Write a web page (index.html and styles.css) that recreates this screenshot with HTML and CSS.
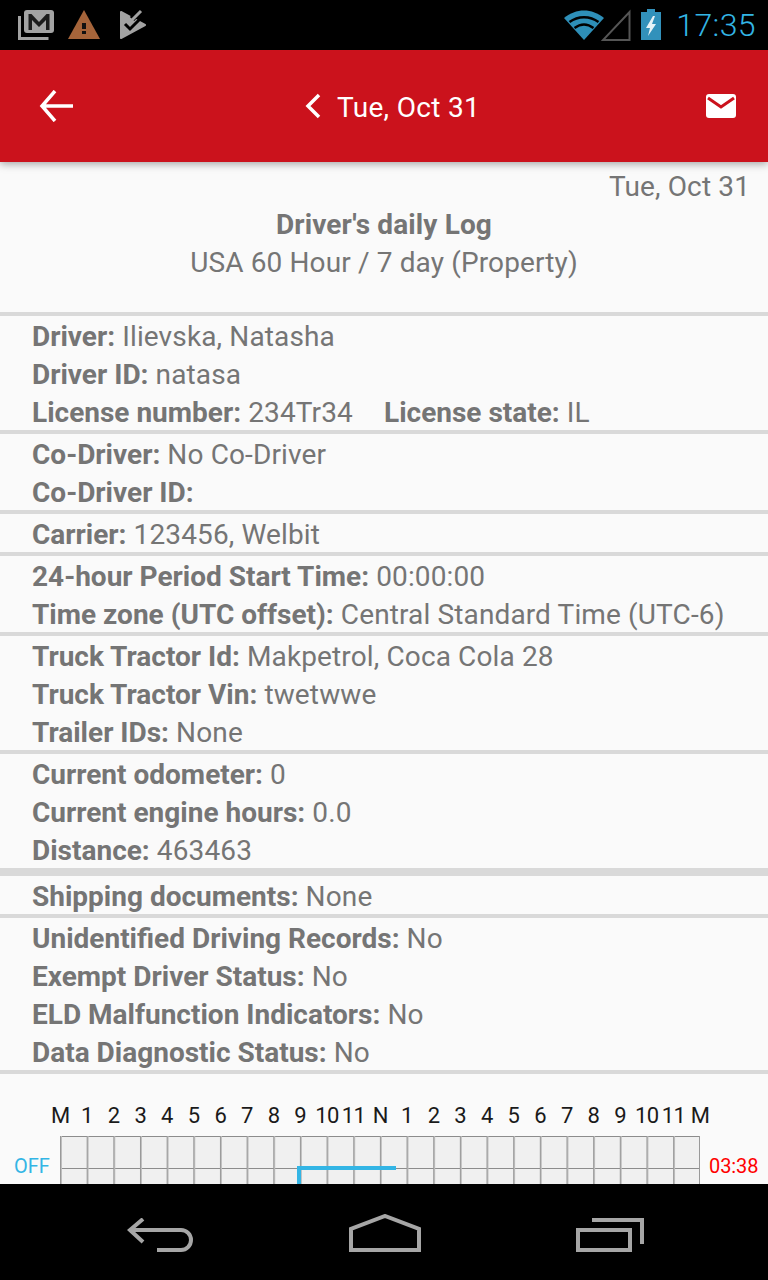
FILE: index.html
```html
<!DOCTYPE html>
<html>
<head>
    <title>Driver's daily Log</title>
    <link rel="stylesheet" href="styles.css">
</head>
<body>
    <div class="screen">
        <div class="status-bar">
            <div class="status-left">
                <svg width="38" height="32" viewBox="0 0 38 32">
                    <path d="M1.500 7v22.500h29" fill="none" stroke="#a3a3a3" stroke-width="3"/>
                    <rect x="6" y="1" width="30" height="23" rx="3" fill="#a3a3a3"/>
                    <path d="M10.500 21V5h3l7.500 8 7.500-8h3v16h-3.500V11l-7 7-7-7v10z" fill="#1c1c1c"/>
                </svg>
                <svg width="32" height="32" viewBox="0 0 32 32">
                    <path d="M16 1 32 30H0z" fill="#a5643a"/>
                    <rect x="14" y="14" width="4" height="6" fill="#111"/>
                    <rect x="14" y="22" width="4" height="3" fill="#111"/>
                </svg>
                <svg class="task-icon" width="26" height="32" viewBox="0 0 26 32">
                    <path d="M1 3 25 16 1 29z" fill="#a3a3a3" stroke="#a3a3a3" stroke-linejoin="round" stroke-width="2"/>
                    <path d="M12 10 21 1" fill="none" stroke="#000" stroke-width="6"/>
                    <path d="M11 12 21 2" fill="none" stroke="#a3a3a3" stroke-width="3"/>
                    <path d="M5 15l5 5 11-11" fill="none" stroke="#000" stroke-width="3"/>
                </svg>
            </div>
            <div class="status-right">
                <svg width="40" height="32" viewBox="0 0 40 32">
                    <path d="M20 31 0 9C12-1 28-1 40 9z" fill="#2e8fb8"/>
                    <path d="M5.500 13C14 6.500 26 6.500 34.500 13M10.500 19c6-4.500 13-4.500 19 0" fill="none" stroke="#000" stroke-width="2.500"/>
                </svg>
                <svg class="signal" width="30" height="32" viewBox="0 0 30 32">
                    <path d="M28.500 3v28H2z" fill="none" stroke="#555" stroke-width="2"/>
                </svg>
                <svg class="battery" width="20" height="32" viewBox="0 0 20 32">
                    <path d="M6 0h8v3h6v28H0V3h6z" fill="#3291bb"/>
                    <path d="M12 7 5 19h4l-2 8 8-12h-4l3-8z" fill="#e6f2f7"/>
                </svg>
                <span class="clock">17:35</span>
            </div>
        </div>

        <div class="toolbar">
            <svg class="back-arrow" width="36" height="32" viewBox="0 0 36 32">
                <path d="M35 16H5M17 1 4 16l13 15" fill="none" stroke="#fff" stroke-width="3.500"/>
            </svg>
            <div class="toolbar-title">
                <svg width="18" height="26" viewBox="0 0 18 26">
                    <path d="M15 2 4 13l11 11" fill="none" stroke="#fff" stroke-width="3.500"/>
                </svg>
                <span>Tue, Oct 31</span>
            </div>
            <svg class="mail" width="30" height="24" viewBox="0 0 30 24">
                <rect width="30" height="24" rx="3" fill="#fff"/>
                <path d="M2 4l13 9L28 4" fill="none" stroke="#cb121c" stroke-width="3"/>
            </svg>
        </div>

        <div class="content">
            <div class="log-header">
                <div class="log-date">Tue, Oct 31</div>
                <div class="log-title">Driver's daily Log</div>
                <div class="log-rule">USA 60 Hour / 7 day (Property)</div>
            </div>

            <div class="section">
                <div class="row"><b>Driver:</b> Ilievska, Natasha</div>
                <div class="row"><b>Driver ID:</b> natasa</div>
                <div class="row"><b>License number:</b> 234Tr34 <b class="inline-gap">License state:</b> IL</div>
            </div>
            <div class="section">
                <div class="row"><b>Co-Driver:</b> No Co-Driver</div>
                <div class="row"><b>Co-Driver ID:</b></div>
            </div>
            <div class="section">
                <div class="row"><b>Carrier:</b> 123456, Welbit</div>
            </div>
            <div class="section">
                <div class="row"><b>24-hour Period Start Time:</b> 00:00:00</div>
                <div class="row"><b>Time zone (UTC offset):</b> Central Standard Time (UTC-6)</div>
            </div>
            <div class="section">
                <div class="row"><b>Truck Tractor Id:</b> Makpetrol, Coca Cola 28</div>
                <div class="row"><b>Truck Tractor Vin:</b> twetwwe</div>
                <div class="row"><b>Trailer IDs:</b> None</div>
            </div>
            <div class="section">
                <div class="row"><b>Current odometer:</b> 0</div>
                <div class="row"><b>Current engine hours:</b> 0.0</div>
                <div class="row"><b>Distance:</b> 463463</div>
            </div>
            <div class="section thick">
                <div class="row"><b>Shipping documents:</b> None</div>
            </div>
            <div class="section">
                <div class="row"><b>Unidentified Driving Records:</b> No</div>
                <div class="row"><b>Exempt Driver Status:</b> No</div>
                <div class="row"><b>ELD Malfunction Indicators:</b> No</div>
                <div class="row"><b>Data Diagnostic Status:</b> No</div>
            </div>

            <div class="chart">
                <div class="hours">
                    <span>M</span><span>1</span><span>2</span><span>3</span><span>4</span><span>5</span><span>6</span><span>7</span><span>8</span><span>9</span><span>10</span><span>11</span><span>N</span><span>1</span><span>2</span><span>3</span><span>4</span><span>5</span><span>6</span><span>7</span><span>8</span><span>9</span><span>10</span><span>11</span><span>M</span>
                </div>
                <div class="chart-row">
                    <span class="status-label">OFF</span>
                    <div class="grid">
                        <div class="duty-line"></div>
                    </div>
                    <span class="status-total">03:38</span>
                </div>
            </div>
        </div>

        <div class="nav-bar">
            <svg width="66" height="34" viewBox="0 0 66 34">
                <path d="M16 1 3 12l13 12M4 12h50a10 10 0 0 1 0 20H30" fill="none" stroke="#a6a6a6" stroke-width="4"/>
            </svg>
            <svg width="72" height="38" viewBox="0 0 72 38">
                <path d="M2 36V15L36 2l34 13v21z" fill="none" stroke="#a6a6a6" stroke-width="4"/>
            </svg>
            <svg width="68" height="34" viewBox="0 0 68 34">
                <path d="M16 2h50v24" fill="none" stroke="#a6a6a6" stroke-width="4"/>
                <rect x="2" y="12" width="52" height="20" fill="none" stroke="#a6a6a6" stroke-width="4"/>
            </svg>
        </div>
    </div>
</body>
</html>
```

FILE: styles.css
```css
html, body {
    margin: 0;
    padding: 0;
}
body {
    font-family: Roboto, "Liberation Sans", sans-serif;
}
.screen {
    width: 768px;
    height: 1280px;
    display: flex;
    flex-direction: column;
    overflow: hidden;
    background-color: #fafafa;
}
.status-bar {
    height: 50px;
    flex: none;
    background-color: #000;
    display: flex;
    justify-content: space-between;
    align-items: center;
    box-sizing: border-box;
    padding: 0 12px 0 18px;
}
.status-left {
    display: flex;
    align-items: center;
    gap: 12px;
}
.task-icon {
    margin-left: 8px;
}
.status-right {
    display: flex;
    align-items: center;
}
.signal {
    margin-left: -3px;
}
.battery {
    margin-left: 10px;
}
.clock {
    margin-left: 15px;
    font-size: 32px;
    font-weight: 300;
    letter-spacing: 0.4px;
    color: #33b5e5;
}
.toolbar {
    height: 112px;
    flex: none;
    background-color: #cb121c;
    box-shadow: 0 2px 8px rgba(0, 0, 0, 0.35);
    position: relative;
    display: flex;
    justify-content: space-between;
    align-items: center;
    box-sizing: border-box;
    padding: 0 32px 0 38px;
}
.toolbar-title {
    display: flex;
    align-items: center;
    gap: 15px;
    margin-left: 4px;
    color: #fff;
    font-size: 28px;
    letter-spacing: 0.3px;
}
.toolbar-title span {
    padding-top: 2px;
}
.content {
    flex: 1;
    min-height: 0;
    overflow: hidden;
    color: #757575;
    font-size: 28px;
    letter-spacing: 0.13px;
}
.log-header {
    height: 150px;
    box-sizing: border-box;
    padding: 6px 18px 0;
    text-align: center;
    line-height: 38px;
}
.log-date {
    text-align: right;
}
.log-title {
    font-weight: 700;
}
.section {
    border-top: 4px solid #d9d9d9;
    padding-left: 32px;
}
.section.thick {
    border-top-width: 8px;
}
.row {
    line-height: 34px;
    padding-top: 4px;
    white-space: nowrap;
}
.row b {
    font-weight: 700;
    letter-spacing: 0;
}
.inline-gap {
    margin-left: 24px;
}
.chart {
    border-top: 4px solid #d9d9d9;
    padding-top: 27px;
}
.hours {
    display: grid;
    grid-template-columns: repeat(25, 26.67px);
    margin-left: 47px;
    color: #1a1a1a;
    font-size: 22px;
    letter-spacing: -0.6px;
    line-height: 30px;
    text-align: center;
}
.chart-row {
    display: flex;
    align-items: flex-start;
    margin-top: 5px;
}
.status-label {
    width: 60px;
    box-sizing: border-box;
    padding: 18px 0 0 14px;
    color: #33b5e5;
    font-size: 20px;
    letter-spacing: 0;
}
.status-total {
    padding: 18px 0 0 9px;
    color: #f00;
    font-size: 20px;
    letter-spacing: -0.1px;
}
.grid {
    width: 640px;
    height: 64px;
    position: relative;
    box-sizing: border-box;
    background-color: #f0f0f0;
    background-image:
        linear-gradient(to right, #999 1px, #bdbdbd 1px, #bdbdbd 2px, transparent 2px),
        linear-gradient(to bottom, #8c8c8c 1px, transparent 1px);
    background-size: 26.67px 100%, 100% 32px;
    border-right: 1px solid #999;
}
.duty-line {
    position: absolute;
    left: 237px;
    top: 30px;
    width: 99px;
    height: 40px;
    box-sizing: border-box;
    border-top: 4px solid #33b5e5;
    border-left: 4px solid #33b5e5;
}
.nav-bar {
    height: 96px;
    flex: none;
    background-color: #000;
    position: relative;
    display: flex;
    justify-content: space-between;
    align-items: flex-end;
    box-sizing: border-box;
    padding: 0 124px 28px 127px;
}
```
